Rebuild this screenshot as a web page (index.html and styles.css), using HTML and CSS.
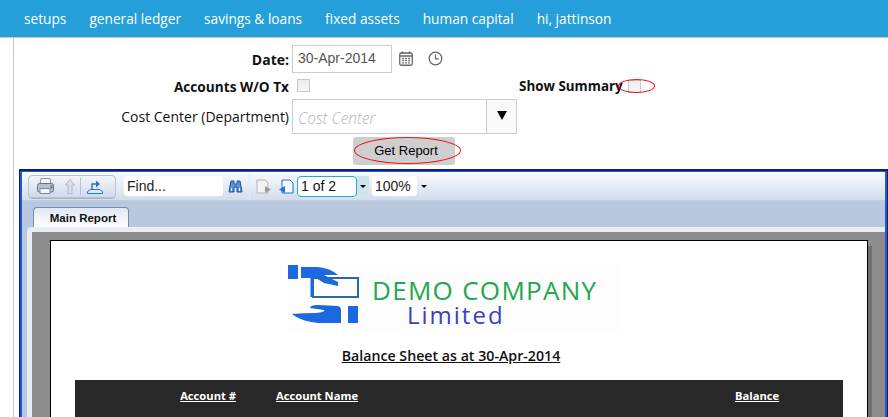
FILE: index.html
```html
<html>
  <head>
    <title>Balance Sheet</title>
    <link rel="stylesheet" href="styles.css">
  </head>
  <body>
    <nav class="topbar">
      <a>setups</a>
      <a>general ledger</a>
      <a>savings &amp; loans</a>
      <a>fixed assets</a>
      <a>human capital</a>
      <a>hi, jattinson</a>
    </nav>

    <main class="content">
      <form class="filters">
        <label class="filter-label strong">Date:</label>
        <div class="date-row">
          <div class="text-input date-input">30-Apr-2014</div>
          <svg class="icon-cal" width="14" height="15" viewBox="0 0 14 15">
            <rect x="0.75" y="2" width="12.5" height="12.25" rx="1.5" fill="none" stroke="#666" stroke-width="1.3"/>
            <path d="M1 5h12" stroke="#666" stroke-width="1.5"/>
            <path d="M3.5 0.5v2.500M10.500 0.5v2.500" stroke="#666" stroke-width="1.3"/>
            <path d="M3 7.500h2M6 7.500h2M9 7.500h2M3 9.700h2M6 9.700h2M9 9.700h2M3 11.900h2M6 11.900h2M9 11.900h2" stroke="#777" stroke-width="1.300"/>
          </svg>
          <svg class="icon-clock" width="15" height="15" viewBox="0 0 15 15">
            <circle cx="7.500" cy="7.500" r="6.300" fill="none" stroke="#666" stroke-width="1.300"/>
            <path d="M7.500 3.500v4.300h3.300" fill="none" stroke="#666" stroke-width="1.200"/>
          </svg>
        </div>

        <label class="filter-label strong accounts-label">Accounts W/O Tx</label>
        <div class="check-row">
          <span class="checkbox"></span>
          <span class="summary">
            <label class="strong summary-label">Show Summary</label>
            <span class="checkbox"></span>
            <span class="ring ring-check"></span>
          </span>
        </div>

        <label class="filter-label">Cost Center (Department)</label>
        <div class="combo">
          <div class="combo-text">Cost Center</div>
          <div class="combo-btn"><span class="combo-arrow"></span></div>
        </div>

        <div class="submit-row">
          <button type="button" class="get-report">Get Report<span class="ring ring-btn"></span></button>
        </div>
      </form>

      <section class="viewer">
        <div class="toolbar">
          <div class="tool-group">
            <svg class="tool-print" width="17" height="16" viewBox="0 0 17 16">
              <path d="M4 0.500h9l1 6H3z" fill="#f4f6fa" stroke="#8a95a5"/>
              <path d="M0.500 7.500q0-2 2-2h12q2 0 2 2v5q0 1.500-2 1.500h-12q-2 0-2-1.500z" fill="#b4c2d6" stroke="#66738a"/>
              <path d="M3 10.500h10v5H3z" fill="#f4f6fa" stroke="#7c8796"/>
              <rect x="13.500" y="7" width="2" height="2" fill="#4aa84a"/>
              <rect x="13.500" y="9" width="2" height="1.500" fill="#d24a3a"/>
            </svg>
            <svg class="tool-up" width="10" height="15" viewBox="0 0 10 15">
              <path d="M5 0.500l4.500 5.500H7v8.500H3V6H0.500z" fill="#dde1e6" stroke="#b2b9c2"/>
            </svg>
            <span class="tool-sep"></span>
            <svg class="tool-export" width="16" height="15" viewBox="0 0 16 15">
              <path d="M0.500 14.500v-2l3-2h9l3 2v2z" fill="#dbe8f7" stroke="#2c6fc0"/>
              <path d="M5 10V5h4" fill="none" stroke="#2c6fc0" stroke-width="1.400"/>
              <path d="M9 1.500l4 3.500-4 3.500z" fill="#2c6fc0"/>
            </svg>
          </div>
          <div class="tool-find">Find...</div>
          <svg class="tool-binoc" width="15" height="13" viewBox="0 0 15 13">
            <path d="M3 1h3v3h3V1h3l2 11H9V7H6v5H1z" fill="#5c95d6" stroke="#1d4f96"/>
            <path d="M3 8h1v3H3zM11 8h1v3h-1z" fill="#fff"/>
          </svg>
          <span class="tool-divider"></span>
          <svg class="tool-page" width="16" height="15" viewBox="0 0 16 15">
            <path d="M1 1h8l3 3v10H1z" fill="#f2f2f2" stroke="#b5b5b5"/>
            <path d="M9 7l6 3.500L9 14z" fill="#9a9a9a"/>
          </svg>
          <svg class="tool-page" width="16" height="15" viewBox="0 0 16 15">
            <path d="M4 1h8l3 3v10H4z" fill="#f4f8fd" stroke="#2c6fc0"/>
            <path d="M7 7L1 10.500 7 14z" fill="#2c6fc0"/>
          </svg>
          <div class="page-box">1 of 2</div>
          <div class="page-spin"><span class="mini-arrow"></span></div>
          <div class="zoom-box">100%</div>
          <span class="mini-arrow zoom-arrow"></span>
        </div>

        <div class="tab-strip">
          <div class="tab">Main Report</div>
        </div>

        <div class="report-area">
          <div class="report-page">
            <div class="logo">
              <svg class="logo-mark" width="72" height="60" viewBox="0 0 72 60">
                <path d="M0 0h10v14H0z" fill="#1c68e0"/>
                <path d="M13 2h17q12 1 20 8H36l14 7v4l-14-3-8-5H13z" fill="#1c68e0"/>
                <rect x="25" y="13" width="45" height="19" fill="none" stroke="#2a67b8" stroke-width="2"/>
                <path d="M24 13v19" stroke="#1c68e0" stroke-width="3"/>
                <path d="M4 49q11-1 24-1 10-1 8-3L22 43q0-3 8-3l20 1q3 1 3 4v13H30Q12 56 4 49z" fill="#1c68e0"/>
                <path d="M60 41h10v17H60z" fill="#1c68e0"/>
              </svg>
              <div class="logo-text">
                <div class="logo-name">DEMO COMPANY</div>
                <div class="logo-sub">Limited</div>
              </div>
            </div>
            <h2 class="report-title">Balance Sheet as at 30-Apr-2014</h2>
            <div class="report-head">
              <span class="col-account">Account #</span>
              <span>Account Name</span>
              <span>Balance</span>
            </div>
          </div>
        </div>
      </section>
    </main>
  </body>
</html>
```

FILE: styles.css
```css
html,
body {
  height: 417px;
  margin: 0;
  padding: 0;
  overflow: hidden;
  background: #fff;
}

body {
  display: flex;
  flex-direction: column;
  font-family: "Open Sans", "Noto Sans", sans-serif;
  font-size: 14px;
  color: #111;
}

.topbar {
  display: flex;
  flex: none;
  align-items: center;
  gap: 23px;
  height: 37px;
  padding-left: 24px;
  background-color: #259fd9;
  border-bottom: 1px solid #c9c9c9;
  color: #fff;
  font-size: 13.7px;
}

.content {
  flex: 1;
  min-height: 0;
  margin-left: 13px;
  padding-top: 7px;
  border-left: 1px solid #c9c9c9;
  box-sizing: border-box;
}

.filters {
  display: grid;
  grid-template-columns: 275px 1fr;
  column-gap: 3px;
  margin: 0;
}

.filter-label {
  align-self: center;
  text-align: right;
  font-size: 14px;
  white-space: nowrap;
}

.strong {
  font-weight: 700;
}

.accounts-label {
  font-size: 13.65px;
}

.summary-label {
  font-size: 13.4px;
  white-space: nowrap;
}

.date-row {
  display: flex;
  align-items: center;
  height: 28px;
}

.text-input {
  box-sizing: border-box;
  border: 1px solid #ccc;
  color: #555;
  font-family: "Liberation Sans", sans-serif;
}

.date-input {
  width: 100px;
  height: 28px;
  padding: 0 0 0 5px;
  font-size: 14px;
  line-height: 25px;
  background: #fff;
}

.icon-cal {
  margin-left: 7px;
  margin-top: -1px;
}

.icon-clock {
  margin-left: 15px;
  margin-top: -1px;
}

.check-row {
  display: flex;
  align-items: flex-start;
  height: 26px;
  box-sizing: border-box;
  padding: 6px 0 0 5px;
}

.checkbox {
  display: block;
  flex: none;
  box-sizing: border-box;
  width: 13px;
  height: 13px;
  border: 1px solid #c8c8c8;
  background: linear-gradient(#ececec, #f8f8f8);
}

.summary {
  position: relative;
  display: flex;
  align-items: center;
  gap: 5px;
  height: 14px;
  margin-left: 209px;
}

.ring {
  position: absolute;
  box-sizing: border-box;
  border: 1px solid #e8141c;
  border-radius: 50%;
}

.ring-check {
  left: 99px;
  top: 0;
  width: 37px;
  height: 14px;
}

.combo {
  display: flex;
  width: 225px;
  height: 35px;
  box-sizing: border-box;
  border: 1px solid #ccc;
}

.combo-text {
  flex: 1;
  padding-left: 5px;
  color: #b5b5b5;
  font-size: 15.5px;
  font-style: italic;
  font-weight: 300;
  line-height: 36px;
}

.combo-btn {
  display: flex;
  align-items: center;
  justify-content: center;
  width: 29px;
  border-left: 1px solid #ccc;
  background: #f9f9f9;
}

.combo-arrow {
  width: 0;
  height: 0;
  margin-bottom: 3px;
  border-left: 5px solid transparent;
  border-right: 5px solid transparent;
  border-top: 9px solid #000;
}

.submit-row {
  grid-column: 1 / 3;
  padding: 3px 0 0 339px;
}

.get-report {
  position: relative;
  display: block;
  width: 102px;
  height: 28px;
  padding: 0 0 2px 4px;
  border: none;
  border-radius: 3px;
  background: #cfcfcf;
  color: #000;
  font-family: "Liberation Sans", sans-serif;
  font-size: 13px;
}

.ring-btn {
  left: 1px;
  top: 0;
  width: 107px;
  height: 27px;
}

.viewer {
  display: flex;
  flex-direction: column;
  box-sizing: border-box;
  height: 248px;
  width: 869px;
  margin: 4px 0 0 5px;
  border: 1px solid #0c2170;
  border-top-width: 2px;
  border-bottom: none;
  box-shadow: inset 2px 1px 0 #2458c4, inset -2px 0 0 #2458c4;
  padding: 1px 2px 0 2px;
  background: #b8c8df;
  overflow: hidden;
}

.toolbar {
  display: flex;
  flex: none;
  align-items: center;
  height: 29px;
  padding-left: 6px;
  box-sizing: border-box;
  border-bottom: 1px solid #c6cbd8;
  background: linear-gradient(#f8fafc, #d2deed);
  font-family: "Liberation Sans", sans-serif;
  font-size: 14px;
}

.tool-group {
  display: flex;
  align-items: center;
  flex: none;
  box-sizing: border-box;
  width: 88px;
  height: 23px;
  padding-left: 8px;
  border: 1px solid #b4c2d6;
  border-radius: 4px;
  background: linear-gradient(#f3f6fa, #cfdaea);
  box-shadow: 0 2px 0 -1px #a9b4c4;
}

.tool-up {
  margin-left: 11px;
}

.tool-sep {
  width: 1px;
  height: 17px;
  margin-left: 5px;
  background: #b4c2d6;
}

.tool-export {
  margin-left: 6px;
}

.tool-find,
.zoom-box {
  box-sizing: border-box;
  height: 20px;
  padding-left: 3px;
  border-radius: 3px;
  background: #fff;
  color: #222;
  line-height: 20px;
}

.tool-find {
  width: 99px;
  margin-left: 8px;
}

.tool-binoc {
  margin-left: 5px;
}

.tool-divider {
  width: 1px;
  height: 25px;
  margin: 0 6px;
  background: #e6ecf4;
}

.tool-page {
  margin-right: 6px;
}

.page-box {
  box-sizing: border-box;
  width: 60px;
  height: 21px;
  margin-left: -3px;
  padding-left: 3px;
  border: 1px solid #2fa9c9;
  border-radius: 4px;
  background: #fff;
  line-height: 19px;
}

.page-spin {
  display: flex;
  align-items: center;
  justify-content: center;
  width: 12px;
  height: 20px;
  background: #cfe3ef;
}

.mini-arrow {
  width: 0;
  height: 0;
  border-left: 3px solid transparent;
  border-right: 3px solid transparent;
  border-top: 3px solid #000;
}

.zoom-box {
  width: 45px;
  margin-left: 3px;
}

.zoom-arrow {
  margin-left: 4px;
}

.tab-strip {
  display: flex;
  flex: none;
  align-items: flex-end;
  height: 26px;
  padding-left: 11px;
  background: #b8c8df;
}

.tab {
  box-sizing: border-box;
  width: 96px;
  height: 20px;
  padding: 1px 0 0 4px;
  border: 1px solid #6f8db5;
  border-bottom: none;
  border-radius: 4px 4px 0 0;
  background: linear-gradient(#dfe7f2, #fff);
  color: #111;
  font-family: "Liberation Sans", sans-serif;
  font-size: 11.5px;
  font-weight: 700;
  line-height: 18px;
  text-align: center;
}

.report-area {
  flex: 1;
  min-height: 0;
  margin-left: 5px;
  padding: 8px 0 0 18px;
  border-top: 5px solid #e9ecf5;
  border-left: 5px solid #e9ecf5;
  border-top-left-radius: 5px;
  background: #8c8c8c;
  overflow: hidden;
}

.report-page {
  width: 816px;
  height: 176px;
  border: 1px solid #000;
  border-bottom: none;
  background: #fff;
  box-shadow: 4px 6px 0 #707070;
  overflow: hidden;
}

.logo {
  display: flex;
  width: 332px;
  height: 65px;
  margin: 24px 0 0 237px;
  background: #fdfdfd;
}

.logo-mark {
  flex: none;
}

.logo-text {
  margin-left: 12px;
}

.logo-name {
  margin-top: 13px;
  color: #1fa84f;
  font-family: "Open Sans", sans-serif;
  font-size: 26px;
  line-height: 24px;
  letter-spacing: 1.3px;
  white-space: nowrap;
}

.logo-sub {
  margin: 2px 0 0 35px;
  color: #3b3fc0;
  font-family: "Open Sans", sans-serif;
  font-size: 24px;
  line-height: 22px;
  letter-spacing: 2px;
}

.report-title {
  margin: 16px 0 0;
  padding-right: 16px;
  font-size: 14.2px;
  font-weight: 600;
  line-height: 20px;
  text-align: center;
  text-decoration: underline;
}

.report-head {
  display: grid;
  grid-template-columns: 161px 419px 1fr;
  column-gap: 40px;
  box-sizing: border-box;
  width: 768px;
  height: 37px;
  margin: 14px 0 0 24px;
  padding-top: 8px;
  background: #282828;
  color: #fff;
  font-size: 11.2px;
  font-weight: 700;
  text-decoration: underline;
}

.col-account {
  text-align: right;
}
```
